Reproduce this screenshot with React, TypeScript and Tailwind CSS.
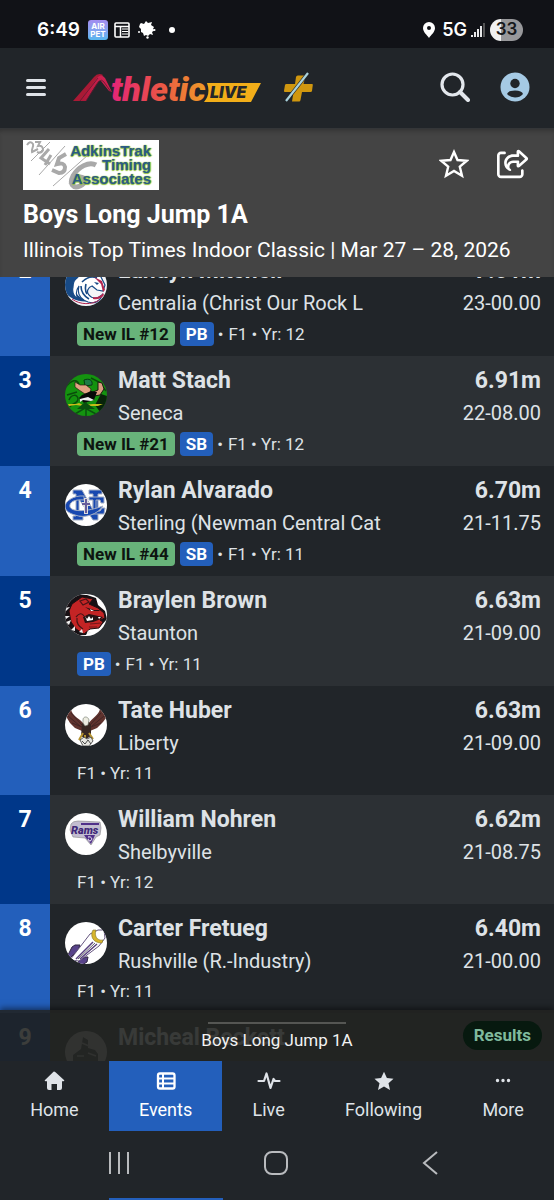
import type { ReactNode } from "react";
import { FaRegShareFromSquare } from "react-icons/fa6";

type Result = {
  place: number;
  name: string;
  school: string;
  metric: string;
  imperial: string;
  rank?: string;
  best?: string;
  info: string;
  logo: ReactNode;
};

function LogoCircle({ id, bg, children }: { id: string; bg: string; children: ReactNode }) {
  return (
    <svg viewBox="0 0 42 42" className="mt-[9px] size-[42px] shrink-0" aria-hidden="true">
      <clipPath id={id}>
        <circle cx="21" cy="21" r="21" />
      </clipPath>
      <g clipPath={`url(#${id})`}>
        <rect width="42" height="42" fill={bg} />
        {children}
      </g>
    </svg>
  );
}

const bronco = (
  <LogoCircle id="bronco" bg="#f4f4f7">
    <path d="M0 6h22C10 13 7 20 10 27c2 5 8 9 15 10-10 2-20-2-25-9z" fill="#174a86" />
    <path d="M12 14c7-8 16-8 23-3l5 10-2 6-6-1-5-4c-4 1-6 6-3 9 3 4 9 4 13 0-2 7-8 9-14 7-8-3-11-9-9-16-4 5-3 11 0 14-6-4-7-9-6-13 0-4 1-7 4-9z" fill="#fff" stroke="#174a86" strokeWidth="1.2" />
    <path d="M17 18c5-5 10-6 15-4M16 22c0 6 3 10 8 13M21 20c-1 4-1 7 1 10" fill="none" stroke="#174a86" strokeWidth="1.6" />
    <path d="M29 13l8 4 3 9-2 2-2-8zM28 33c4 1 8-1 10-4l1 2c-3 4-7 5-11 4z" fill="#b32650" />
    <path d="M29 18l5 1-2 2z" fill="#174a86" />
    <path d="M7 35c8 6 20 6 27 1" fill="none" stroke="#b32650" strokeWidth="1" />
  </LogoCircle>
);

const irish = (
  <LogoCircle id="irish" bg="#14930f">
    <path d="M0 14c7-9 12-9 14-4M4 26c2-6 9-6 9-1s-7 4-8 8M2 21l10-3M26 4l8 4 7 9" fill="none" stroke="#0a4c0b" strokeWidth="1.5" />
    <path d="M19 6c5-2 9 0 8 5l-7 1z" fill="#1d7b45" stroke="#083b14" />
    <path d="M10 8l5 3 6 0 5 4-1 4-5 1-6-4-4-3z" fill="#e0a383" stroke="#281d14" strokeWidth=".7" />
    <path d="M33 8l4 1 2 6-4 6-6 1-1-4 5-2z" fill="#d99c7f" stroke="#1a1b10" />
    <path d="M17 21l9-4 6 1-3 8-10 3-5-5z" fill="#080a09" />
    <path d="M36 20l6 2v15l-7 1-5-7z" fill="#08240a" />
    <path d="M15 25l8-2 6 3-3 1-8-1-3 2z" fill="#eee" />
    <path d="M3 30l8 0 3-1 4 2 10-1 10 0-5 2H18l-7-1-7 1z" fill="#c7bb19" />
    <path d="M12 35l8-7 10 7z" fill="#0a500f" />
    <path d="M10 40l10-6 11 6M21 28v14" stroke="#0a500f" strokeWidth="1.5" fill="none" />
  </LogoCircle>
);

const monogram = (
  <LogoCircle id="monogram" bg="#fff">
    <g stroke="#a5afc4" strokeWidth="1" fill="#1848b0">
      <path d="M8 6h9l11 20V10h-4V6h13v4h-4v26h-5L14 15v17h4v4H8v-4h3V10H8z" />
      <path d="M24 13h15v6h-3l-1-3h-4v11h4l2-3h3l-1 6H25v-3h3V16h-4z" />
      <path d="M19 12v4C8 15 4 19 5 23c2 5 17 5 33-1-5 8-18 13-28 9C3 29 0 26 0 22s8-11 19-10z" />
    </g>
    <path d="M21 14v16M17 20h8" stroke="#ddd" strokeWidth="4" />
    <path d="M21 15v14M17 20h8" stroke="#665c9b" strokeWidth="2" />
  </LogoCircle>
);

const bulldog = (
  <LogoCircle id="bulldog" bg="#fff">
    <path d="M0 9l9-8 13 0 9 3 2 7 7 6 2 8-7 8-11 2-3 6H9L0 33z" fill="#171014" />
    <path d="M7 10l10-7 11 2-4 5 9 4 6 5 1 5-5 2 3 2-4 6-9 1-6 5-8-5-5-7-2-11z" fill="#c42425" stroke="#211012" strokeWidth="1" />
    <path d="M15 7l6-2 3 3-6 3zM11 23q5-6 8-1M12 24q-1 7 6 11" fill="none" stroke="#4a1416" strokeWidth="1.200" />
    <path d="M20 13l9 3 6 0-1 1-8 0z" fill="#271214" />
    <path d="M18 23l6-3 14 3-2 2-8 3-8 1z" fill="#271214" />
    <path d="M20 22l2 3 2-3 2 3 2-2v3l-6 1zM33 23l1 2 2-2zM25 15l4 2-3 0z" fill="#fff" />
    <path d="M25 30l11-1M24 33l8 0" stroke="#731719" strokeWidth="1.200" />
    <path d="M0 14l5-1-4 4M0 22l5 0-4 3M1 28l5-2-2 5M6 36l4-4 0 5M14 38l3-3 1 4M22 40l1-4 3 3" fill="#eee" />
  </LogoCircle>
);

const eagle = (
  <LogoCircle id="eagle" bg="#fff">
    <path d="M2 14c0-4 2-8 4-9 1 7 8 9 13 15l-2 7-7-3-5-5zM41 14c0-4-3-8-6-9-1 6-8 9-12 15l2 7 7-3 6-6z" fill="#60332e" />
    <path d="M3 12l12 10M6 9l11 12M39 12L27 22M36 9L25 21M7 19l10 4M36 19l-10 4" stroke="#3b2324" strokeWidth=".8" />
    <path d="M17 20l3-3h3l3 4 0 11-5 3-5-3z" fill="#382722" />
    <path d="M18 16c0-4 5-4 6 0l-1 5-3 1-2-3z" fill="#edece1" stroke="#697265" strokeWidth=".6" />
    <path d="M18 29l-4 7M24 29l4 6M20 31v7" stroke="#b79530" strokeWidth="2" />
    <path d="M15 36l4-3 3 2 4-2 2 4-4 5h-6z" fill="#e6e6e1" stroke="#353434" strokeWidth=".8" />
    <path d="M17 37l3 3 3-4 3 4" fill="none" stroke="#222" strokeWidth=".8" />
  </LogoCircle>
);

const rams = (
  <LogoCircle id="rams" bg="#fff">
    <path d="M6 11q2-3 7-3l22 1 1 6-1 7-4 2-5 8-6-7-12-1-3-7z" fill="#c3bdd0" stroke="#888" strokeWidth=".6" />
    <path d="M16 11l18 0" stroke="#51318a" strokeWidth="1.800" />
    <path d="M19 22h11l-4 9-5-6z" fill="#51318a" />
    <text x="6" y="21" fontFamily="Roboto, sans-serif" fontWeight="900" fontStyle="italic" fontSize="11" fill="#3f2878">Rams</text>
    <path d="M23 24c4-1 5 3 2 4-2 0-2-2-1-2" fill="none" stroke="#fff" strokeWidth="1" />
  </LogoCircle>
);

const rocket = (
  <LogoCircle id="rocket" bg="#fff">
    <path d="M7 25l3-2h5l-2 5-9 9-2-2z" fill="#58438a" stroke="#302742" />
    <path d="M14 38l7-3 2 0-1 5-5 3-4-1z" fill="#58438a" stroke="#302742" />
    <path d="M5 38L25 12l8-4 6 0 1 8-6 8-20 15z" fill="#fff" stroke="#65557f" strokeWidth="1" />
    <path d="M11 37l17-17M15 37l17-15" stroke="#59417f" strokeWidth="1.500" />
    <path d="M13 37l17-16" stroke="#20202a" strokeWidth=".7" />
    <path d="M28 8c-3 5-1 13 9 13l1-3c-6 1-9-4-7-10z" fill="#d8b52c" stroke="#7f762c" strokeWidth=".6" />
  </LogoCircle>
);

const knight = (
  <LogoCircle id="knight" bg="#a7a7a7">
    <path d="M18 6l5 3v8l7 2 3 4v19H8V24l8-6z" fill="#33383d" />
    <path d="M12 25h7M23 22l8 3M17 12l7 3" stroke="#999" strokeWidth="1.5" />
  </LogoCircle>
);

const results: Result[] = [
  { place: 2, name: "Landyn Mitchell", school: "Centralia (Christ Our Rock L", metric: "7.01m", imperial: "23-00.00", rank: "New IL #12", best: "PB", info: "F1 • Yr: 12", logo: bronco },
  { place: 3, name: "Matt Stach", school: "Seneca", metric: "6.91m", imperial: "22-08.00", rank: "New IL #21", best: "SB", info: "F1 • Yr: 12", logo: irish },
  { place: 4, name: "Rylan Alvarado", school: "Sterling (Newman Central Cat", metric: "6.70m", imperial: "21-11.75", rank: "New IL #44", best: "SB", info: "F1 • Yr: 11", logo: monogram },
  { place: 5, name: "Braylen Brown", school: "Staunton", metric: "6.63m", imperial: "21-09.00", best: "PB", info: "F1 • Yr: 11", logo: bulldog },
  { place: 6, name: "Tate Huber", school: "Liberty", metric: "6.63m", imperial: "21-09.00", info: "F1 • Yr: 11", logo: eagle },
  { place: 7, name: "William Nohren", school: "Shelbyville", metric: "6.62m", imperial: "21-08.75", info: "F1 • Yr: 12", logo: rams },
  { place: 8, name: "Carter Fretueg", school: "Rushville (R.-Industry)", metric: "6.40m", imperial: "21-00.00", info: "F1 • Yr: 11", logo: rocket },
  { place: 9, name: "Micheal Beckett", school: "", metric: "", imperial: "", info: "", logo: knight },
];

function StatusBar() {
  return (
    <div className="flex h-12 shrink-0 items-center bg-[#111217] pt-3 pr-[31px] pl-[37px] text-white">
      <span className="font-[Inter,sans-serif] text-[19px] leading-6 font-semibold">6:49</span>
      <span className="ml-2 flex size-5 flex-col items-center justify-center rounded-[3px] bg-linear-to-b from-[#a28cf0] to-[#55b6ee] font-[Inter,sans-serif] text-[8px] leading-2 font-bold">
        <span>AIR</span>
        <span>PET</span>
      </span>
      <svg viewBox="0 0 16 16" className="ml-1.5 size-4" aria-hidden="true">
        <rect x="1" y="1" width="14" height="14" rx="1" fill="none" stroke="#fff" strokeWidth="1.6" />
        <path d="M1 4.5h14M6.500 5v10" stroke="#fff" strokeWidth="1.500" />
        <path d="M8 7h6M8 9.500h6M8 12h6" stroke="#fff" strokeWidth="1.100" />
      </svg>
      <svg viewBox="0 0 20 18" className="ml-[7px] h-[18px] w-5" aria-hidden="true">
        <path d="M4 2l3 1 2-3 2 2 4-1-1 3 3 2-1 2 2 1-3 2 1 3-3-1-2 2-2-1-2 1-1-3-2-1 0-3-2-2 1-3z" fill="#fff" />
        <circle cx="2" cy="11" r="1" fill="#fff" />
        <circle cx="10.500" cy="16.500" r="1.200" fill="#fff" />
        <circle cx="17.500" cy="9" r="1" fill="#fff" />
      </svg>
      <span className="ml-3 size-1.5 rounded-full bg-white" />
      <svg viewBox="0 0 12 16" className="ml-auto h-4 w-3" aria-hidden="true">
        <path fillRule="evenodd" d="M6 0a6 6 0 0 0-6 6c0 4 4 7 6 10 2-3 6-6 6-10a6 6 0 0 0-6-6zm0 4a2 2 0 1 1 0 4 2 2 0 0 1 0-4z" fill="#fff" />
      </svg>
      <span className="ml-[7px] font-[Inter,sans-serif] text-lg leading-6 font-semibold">5G</span>
      <svg viewBox="0 0 14 14" className="ml-1 size-3.5" aria-hidden="true">
        <path d="M1 14v-2M4 14v-5M7 14V6M10 14V3" stroke="#fff" strokeWidth="1.800" />
        <path d="M13 14V0" stroke="#666" strokeWidth="1.600" />
      </svg>
      <span className="ml-[5px] flex h-[22px] w-[33px] items-center justify-center rounded-full bg-linear-to-r from-[#f1f1f1] from-33% to-[#98989b] to-33% font-[Inter,sans-serif] text-[17px] font-semibold text-[#17181b]">33</span>
    </div>
  );
}

function Brand() {
  return (
    <svg viewBox="0 0 188 30" className="h-[30px] w-[188px]" role="img" aria-label="AthleticLIVE">
      <defs>
        <linearGradient id="brand" gradientUnits="userSpaceOnUse" x1="38" y1="0" x2="132" y2="0">
          <stop offset="0" stopColor="#e42478" />
          <stop offset=".5" stopColor="#ea5149" />
          <stop offset="1" stopColor="#ef9c27" />
        </linearGradient>
        <linearGradient id="peak" x1="0" y1="1" x2="1" y2="0">
          <stop offset="0" stopColor="#aa1836" />
          <stop offset="1" stopColor="#d52256" />
        </linearGradient>
      </defs>
      <path d="M0 29L21 5q4-5 9-2l-18 26z" fill="#a91a35" />
      <path d="M7 29L24 6q4-5 8 0l7 14-3-1-8-10q-2-1-5 3L13 29z" fill="url(#peak)" />
      <path d="M7 29L25 6M13 29L26 9q3-2 5 1l7 10" fill="none" stroke="#5d1931" strokeWidth=".8" />
      <path d="M131 11h57l-10 19h-47q7-8 3-19z" fill="#f2ae19" />
      <text x="38" y="29" fontFamily="Roboto, sans-serif" fontWeight="900" fontStyle="italic" fontSize="34" fill="url(#brand)">thletic</text>
      <text x="137" y="26" fontFamily="Inter, sans-serif" fontWeight="900" fontStyle="italic" fontSize="16" fill="#25272a">LIVE</text>
    </svg>
  );
}

function AppBar() {
  return (
    <header className="flex h-[81px] shrink-0 items-center border-b border-[#343638] bg-[#212529] pr-6 pb-0.5 pl-[26px]">
      <button type="button" aria-label="Menu" className="flex w-5 flex-col gap-1">
        <span className="h-[3px] rounded-full bg-[#dfe3e8]" />
        <span className="h-[3px] rounded-full bg-[#dfe3e8]" />
        <span className="h-[3px] rounded-full bg-[#dfe3e8]" />
      </button>
      <a href="#home" className="ml-[27px]">
        <Brand />
      </a>
      <svg viewBox="0 0 30 30" className="ml-[22px] size-[30px]" aria-hidden="true">
        <path d="M13 5q.3-1.500 1.800-1.500H21q1.500 0 1.200 1.500L20.500 12H29q1 0 .8 1l-.8 6q-.2 1-1.500 1H19l-1.500 8q-.2 1.500-1.500 1.500H9L10.500 20H2q-1.200 0-1-1.200L2 13q.2-1 1.500-1H12z" fill="#d0970f" />
        <path d="M25 1L3 29" stroke="#212529" strokeWidth="3.500" />
        <path d="M25 1L3 29" stroke="#a9d2dc" strokeWidth="2.200" />
      </svg>
      <button type="button" aria-label="Search" className="ml-auto">
        <svg viewBox="0 0 30 30" className="size-[30px]" fill="none" stroke="#e3e7ec" aria-hidden="true">
          <circle cx="12.500" cy="12.500" r="10.500" strokeWidth="3.200" />
          <path d="M20 20l8 8" strokeWidth="4" strokeLinecap="round" />
        </svg>
      </button>
      <button type="button" aria-label="Account" className="ml-[30px]">
        <svg viewBox="0 0 30 30" className="size-[30px]" aria-hidden="true">
          <circle cx="15" cy="15" r="14.500" fill="#a5cae4" />
          <circle cx="15" cy="11.500" r="4.700" fill="#212529" />
          <path d="M7 22q1-3.500 8-3.500T23 22q-3 3.500-8 3.500T7 22z" fill="#212529" />
        </svg>
      </button>
    </header>
  );
}

function EventHeader() {
  return (
    <section className="h-[148px] shrink-0 bg-[#444444] px-[23px] pt-[11px] text-white shadow-[inset_0_4px_4px_-2px_#333]">
      <div className="flex items-start justify-between">
        <div className="relative flex h-[50px] w-[136px] items-center justify-end bg-white pr-2">
          <svg viewBox="0 0 80 50" className="absolute top-0 left-0 h-[50px] w-20" aria-hidden="true">
            <g fill="none" stroke="#a9a9a9">
              <path d="M8 21L27 2M16 35L42 6M30 46L65 15" strokeWidth="1" />
              <path d="M4 5q3-5 6-1c1 3-2 5-1 8l6-3M12 2l5 0-2 4q5-1 5 4-2 4-6 2" strokeWidth="2" />
              <path d="M26 9l-8 9 9 6m1-9l-6 10" strokeWidth="3" />
              <path d="M43 14l-7 4-2 6q7-2 8 3 0 6-6 6l-7-3" strokeWidth="4" />
              <path d="M73 25c-7-4-18 2-23 11-4 8 0 13 7 10 6-3 6-9 0-9-4 0-8 3-9 7" strokeWidth="5" />
            </g>
          </svg>
          <p className="relative text-right font-['Liberation_Sans',sans-serif] text-[15px] leading-[14px] font-bold text-[#2b5b86] [text-shadow:0_0_1px_#8fbf3a,1px_0_1px_#9ac84b,0_1px_1px_#8fbf3a]">
            AdkinsTrak
            <br />
            Timing
            <br />
            Associates
          </p>
        </div>
        <div className="mt-2 mr-0.5 flex items-center gap-7">
          <button type="button" aria-label="Follow event">
            <svg viewBox="0 0 30 32" className="h-8 w-[30px]" aria-hidden="true">
              <path d="M15 4l3.500 8 9.300.7-7 6 2.200 9L15 23l-8 4.700 2.200-9-7-6 9.300-.7z" fill="none" stroke="#fff" strokeWidth="2.400" />
            </svg>
          </button>
          <button type="button" aria-label="Share event">
            <FaRegShareFromSquare className="size-8" />
          </button>
        </div>
      </div>
      <h1 className="mt-2 text-[25px] leading-[34px] font-bold">Boys Long Jump 1A</h1>
      <p className="text-[21px] leading-9">Illinois Top Times Indoor Classic | Mar 27 – 28, 2026</p>
    </section>
  );
}

function ResultRow({ result }: { result: Result }) {
  return (
    <li className="group flex bg-[#212529] even:bg-[#2c3034]">
      <div className="w-[50px] shrink-0 bg-[#235fbb] pt-[9px] text-center text-[23px] leading-8 font-bold text-white group-even:bg-[#003789]">
        {result.place}
      </div>
      <div className="min-w-0 flex-1 pt-[9px] pr-[13px] pb-2.5 pl-[15px]">
        <div className="flex">
          {result.logo}
          <div className="ml-[11px] min-w-0 flex-1">
            <h2 className="truncate text-[23px] leading-8 font-bold">{result.name}</h2>
            <p className="h-[34px] truncate text-xl leading-8">{result.school}</p>
          </div>
          <div className="shrink-0 text-right">
            <p className="text-[23px] leading-8 font-bold">{result.metric}</p>
            <p className="text-xl leading-8">{result.imperial}</p>
          </div>
        </div>
        <div className="mt-px ml-3 flex items-center text-[17px] leading-[23px]">
          {result.rank && <span className="mr-[5px] rounded bg-[#68b37a] px-1.5 leading-6 font-bold text-[#0d1510]">{result.rank}</span>}
          {result.best && (
            <>
              <span className="mr-1 rounded bg-[#235fbb] px-1.5 leading-6 font-bold text-white">{result.best}</span>
              <span className="mr-[5px]">•</span>
            </>
          )}
          <span>{result.info}</span>
        </div>
      </div>
    </li>
  );
}

function NavItem({ label, active = false, children }: { label: string; active?: boolean; children: ReactNode }) {
  return (
    <a
      href={`#${label.toLowerCase()}`}
      aria-current={active ? "page" : undefined}
      className={
        active
          ? "flex flex-auto flex-col items-center bg-[#235fbb] pt-2.5 text-white"
          : "flex flex-auto flex-col items-center pt-2.5 text-[#dfe3e8]"
      }
    >
      <svg viewBox="0 0 24 20" className="h-5 w-6" aria-hidden="true">
        {children}
      </svg>
      <span className="mt-[5px] text-lg leading-7">{label}</span>
    </a>
  );
}

export default function App() {
  return (
    <div className="flex h-screen flex-col bg-[#212529] font-[Roboto,sans-serif] text-[#dee2e6]">
      <StatusBar />
      <AppBar />
      <EventHeader />
      <main className="relative min-h-0 flex-1 overflow-hidden">
        <ol className="-mt-[31px]">
          {results.map((result) => (
            <ResultRow key={result.place} result={result} />
          ))}
        </ol>
        <div className="absolute inset-x-0 bottom-0 h-[51px] bg-[#212220]/88 shadow-[0_-2px_6px_rgba(0,0,0,0.5)]">
          <div className="mx-auto mt-3 h-0.5 w-[138px] bg-[#555653]" />
          <p className="text-center text-[17px] leading-8 text-[#f2f2f2]">Boys Long Jump 1A</p>
          <button type="button" className="absolute top-[11px] right-3 h-[29px] rounded-full bg-[#07190f] px-[11px] text-[17px] leading-[29px] font-bold text-[#80b99d]">
            Results
          </button>
        </div>
      </main>
      <nav aria-label="Main" className="flex h-[70px] shrink-0">
        <NavItem label="Home">
          <path d="M12 0.500Q12.700.500 13.500 1.200L22 9q1 1-.5 1.300H20V17q0 2-2 2h-3v-6H9.500v6H7q-2 0-2-2v-6.700H3.500Q2 10 3 9l8-7.800Q11.500.500 12 .500z" fill="currentColor" />
        </NavItem>
        <NavItem label="Events" active>
          <rect x="4" y="2.500" width="16.500" height="15" rx="1.800" fill="none" stroke="currentColor" strokeWidth="2.300" />
          <path d="M4 7.500h17M4 12.500h17M9 2.500v15" stroke="currentColor" strokeWidth="2" />
        </NavItem>
        <NavItem label="Live">
          <path d="M1.500 10H7l2.500-7.500 4 14.500 3-9 1.500 2h4.500" fill="none" stroke="currentColor" strokeWidth="2.200" strokeLinejoin="round" strokeLinecap="round" />
        </NavItem>
        <NavItem label="Following">
          <path d="M12 .800l2.900 6.200 6.600.700-5 4.500 1.500 6.800-6-3.400L6 19l1.500-6.800-5-4.500L9.100 7z" fill="currentColor" />
        </NavItem>
        <NavItem label="More">
          <path d="M6.500 9.500h.01M12 9.500h.01M17.500 9.500h.01" stroke="currentColor" strokeWidth="3.400" strokeLinecap="round" />
        </NavItem>
      </nav>
      <div className="flex h-[67px] shrink-0 items-center justify-between pr-[116px] pb-1 pl-[108px] text-[#b9bbbe]">
        <button type="button" aria-label="Recent apps">
          <svg viewBox="0 0 22 24" className="h-6 w-[22px]" aria-hidden="true">
            <path d="M2 1v22M11 1v22M20 1v22" stroke="currentColor" strokeWidth="2" />
          </svg>
        </button>
        <button type="button" aria-label="Home screen">
          <svg viewBox="0 0 24 24" className="size-6" aria-hidden="true">
            <rect x="1" y="1" width="22" height="22" rx="7" fill="none" stroke="currentColor" strokeWidth="2" />
          </svg>
        </button>
        <button type="button" aria-label="Back">
          <svg viewBox="0 0 16 24" className="h-6 w-4" aria-hidden="true">
            <path d="M15 1L2 12l13 11" fill="none" stroke="currentColor" strokeWidth="2" />
          </svg>
        </button>
      </div>
      <div className="ml-[109px] h-0.5 w-[114px] shrink-0 bg-[#235fbb]" />
    </div>
  );
}
